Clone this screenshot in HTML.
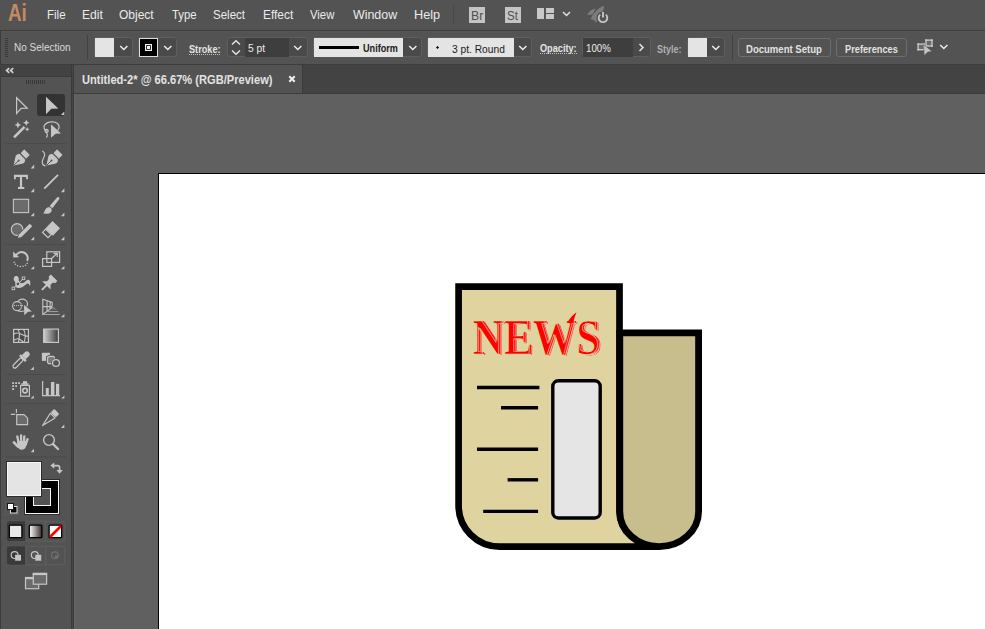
<!DOCTYPE html>
<html><head><meta charset="utf-8">
<style>
*{margin:0;padding:0;box-sizing:border-box}
html,body{width:985px;height:629px;overflow:hidden;background:#606060;font-family:"Liberation Sans",sans-serif}
.a{position:absolute}
.t{position:absolute;white-space:nowrap;transform-origin:0 0;line-height:normal}
svg{position:absolute}
</style></head><body>

<div class="a" style="left:0px;top:0px;width:985px;height:30px;background:#535353"></div>
<div class="a" style="left:0px;top:30px;width:985px;height:1px;background:#3c3c3c"></div>
<div class="a" style="left:0px;top:31px;width:985px;height:33px;background:#535353"></div>
<div class="a" style="left:0px;top:31px;width:985px;height:1px;background:#575757"></div>
<div class="a" style="left:0px;top:64px;width:985px;height:1px;background:#3d3d3d"></div>
<div class="a" style="left:74px;top:65px;width:911px;height:28px;background:#434343"></div>
<div class="a" style="left:74px;top:65px;width:228px;height:28px;background:#535353"></div>
<div class="a" style="left:302px;top:65px;width:1px;height:28px;background:#3b3b3b"></div>
<div class="a" style="left:74px;top:93px;width:911px;height:1px;background:#3c3c3c"></div>
<div class="a" style="left:74px;top:94px;width:911px;height:535px;background:#606060"></div>
<div class="a" style="left:74px;top:94px;width:1px;height:535px;background:#666666"></div>
<div class="a" style="left:71px;top:65px;width:1px;height:564px;background:#393939"></div>
<div class="a" style="left:72px;top:65px;width:1px;height:564px;background:#464646"></div>
<div class="a" style="left:73px;top:65px;width:1px;height:564px;background:#393939"></div>
<div class="a" style="left:0px;top:65px;width:71px;height:11px;background:#434343"></div>
<div class="a" style="left:0px;top:75.5px;width:71px;height:1.5px;background:#3b3b3b"></div>
<div class="a" style="left:0px;top:77px;width:71px;height:552px;background:#535353"></div>
<div class="a" style="left:0px;top:31px;width:1px;height:598px;background:#3d3d3d"></div>
<div class="a" style="left:158px;top:173px;width:827px;height:456px;background:#fff;border-left:1px solid #000;border-top:1px solid #000"></div>
<div class="t" style="left:8.2px;top:-0.2px;font-size:23px;font-weight:bold;color:#c48a62;transform:scaleX(0.82)">Ai</div>
<div class="a" style="left:453px;top:5px;width:1px;height:19px;background:#484848"></div>
<div class="a" style="left:469px;top:7px;width:16px;height:16px;background:#c4c4c4"></div>
<div class="a" style="left:505px;top:7px;width:16px;height:16px;background:#c4c4c4"></div>
<svg style="left:537px;top:7px" width="36" height="14"><g fill="#c8c8c8"><rect x="0" y="1" width="7" height="11"/><rect x="9" y="1" width="8" height="5"/><rect x="9" y="7" width="8" height="5"/></g><path d="M26,5 L29.5,8.5 L33,5" fill="none" stroke="#e0e0e0" stroke-width="1.5"/></svg>
<svg style="left:584px;top:3px" width="26" height="26" viewBox="584 3 26 26"><g fill="#7c7c7c"><path d="M587,15 C589,11.2 592,9.2 595.5,8.6 L592.5,14.5 Z"/><path d="M590.5,19 C593.5,13 598.5,7.5 604.2,5.8 C603.8,11.5 600.5,16.5 596,21 Z"/><path d="M594.8,22.6 C594.6,20.5 595.5,18.8 597.5,17 L600.8,19.5 Z"/></g><circle cx="603" cy="18" r="6.6" fill="#535353"/><path d="M600.2,14.6 A4.3,4.3 0 1 0 605.8,14.6" fill="none" stroke="#c4c4c4" stroke-width="1.9"/><path d="M603,12 V17.6" stroke="#c4c4c4" stroke-width="1.9"/></svg>
<div class="a" style="left:5px;top:38px;width:3px;height:19px;background:repeating-linear-gradient(#383838 0 1px,transparent 1px 2px)"></div>
<div class="a" style="left:87px;top:35px;width:1px;height:25px;background:#424242"></div>
<div class="a" style="left:94px;top:37.3px;width:39px;height:19.900000000000006px;background:#4a4a4a;border:1px solid #5e5e5e;border-radius:3px"></div>
<div class="a" style="left:95px;top:38px;width:19px;height:19px;background:#e4e4e4"></div>
<svg class="a" style="left:119px;top:45px" width="10" height="6"><path d="M1.2,1 L4.8,4.5 L8.4,1" fill="none" stroke="#ececec" stroke-width="1.5"/></svg>
<div class="a" style="left:138px;top:37.3px;width:39px;height:19.900000000000006px;background:#4a4a4a;border:1px solid #5e5e5e;border-radius:3px"></div>
<div class="a" style="left:139px;top:38px;width:19px;height:19px;background:#000;border:1px solid #dcdcdc"></div>
<svg style="left:139px;top:38px" width="19" height="19" viewBox="139 38 19 19"><rect x="145.6" y="44.6" width="5.8" height="5.8" fill="none" stroke="#f0f0f0" stroke-width="1.2"/><rect x="147" y="46" width="3" height="3" fill="#f0f0f0"/></svg>
<svg class="a" style="left:163px;top:45px" width="10" height="6"><path d="M1.2,1 L4.8,4.5 L8.4,1" fill="none" stroke="#ececec" stroke-width="1.5"/></svg>
<div class="a" style="left:189px;top:54px;width:31px;height:1px;background:repeating-linear-gradient(90deg,#c0c0c0 0 1px,transparent 1px 2px)"></div>
<div class="a" style="left:227px;top:37.3px;width:81px;height:19.900000000000006px;background:#4a4a4a;border:1px solid #5e5e5e;border-radius:3px"></div>
<div class="a" style="left:245px;top:38px;width:44px;height:19px;background:#3e3e3e"></div>
<svg style="left:230px;top:39px" width="12" height="17"><path d="M2,5.5 L6,1.8 L10,5.5 M2,11.5 L6,15.2 L10,11.5" fill="none" stroke="#e6e6e6" stroke-width="1.4"/></svg>
<svg class="a" style="left:293px;top:45px" width="10" height="6"><path d="M1.2,1 L4.8,4.5 L8.4,1" fill="none" stroke="#ececec" stroke-width="1.5"/></svg>
<div class="a" style="left:313px;top:37.3px;width:109px;height:19.900000000000006px;background:#4a4a4a;border:1px solid #5e5e5e;border-radius:3px"></div>
<div class="a" style="left:314px;top:38px;width:89px;height:19px;background:#e4e4e4"></div>
<div class="a" style="left:319px;top:46px;width:40px;height:3px;background:#000"></div>
<svg class="a" style="left:408px;top:45px" width="10" height="6"><path d="M1.2,1 L4.8,4.5 L8.4,1" fill="none" stroke="#ececec" stroke-width="1.5"/></svg>
<div class="a" style="left:427px;top:37.3px;width:105px;height:19.900000000000006px;background:#4a4a4a;border:1px solid #5e5e5e;border-radius:3px"></div>
<div class="a" style="left:428px;top:38px;width:86px;height:19px;background:#e4e4e4"></div>
<svg style="left:436px;top:46px" width="3" height="3"><path d="M1.5,0 L3,1.5 L1.5,3 L0,1.5Z" fill="#000"/></svg>
<svg class="a" style="left:518px;top:45px" width="10" height="6"><path d="M1.2,1 L4.8,4.5 L8.4,1" fill="none" stroke="#ececec" stroke-width="1.5"/></svg>
<div class="a" style="left:540px;top:53px;width:37px;height:1px;background:repeating-linear-gradient(90deg,#c0c0c0 0 1px,transparent 1px 2px)"></div>
<div class="a" style="left:582px;top:37.3px;width:69px;height:19.900000000000006px;background:#4a4a4a;border:1px solid #5e5e5e;border-radius:3px"></div>
<div class="a" style="left:583px;top:38px;width:50px;height:19px;background:#3e3e3e"></div>
<svg style="left:638px;top:43px" width="7" height="9"><path d="M1.5,1 L5,4.5 L1.5,8" fill="none" stroke="#e6e6e6" stroke-width="1.5"/></svg>
<div class="a" style="left:687px;top:37.3px;width:38px;height:19.900000000000006px;background:#4a4a4a;border:1px solid #5e5e5e;border-radius:3px"></div>
<div class="a" style="left:688px;top:38px;width:19px;height:19px;background:#e4e4e4"></div>
<svg class="a" style="left:711px;top:45px" width="10" height="6"><path d="M1.2,1 L4.8,4.5 L8.4,1" fill="none" stroke="#ececec" stroke-width="1.5"/></svg>
<div class="a" style="left:732px;top:35px;width:1px;height:25px;background:#424242"></div>
<div class="a" style="left:738px;top:38px;width:93px;height:18.5px;border:1px solid #6e6e6e;border-radius:3px"></div>
<div class="a" style="left:836px;top:38px;width:71px;height:18.5px;border:1px solid #6e6e6e;border-radius:3px"></div>
<svg style="left:910px;top:34px" width="30" height="26" viewBox="910 34 30 26"><g fill="#6a6a6a" stroke="#cdcdcd" stroke-width="1.3"><rect x="918.1" y="44.1" width="6" height="5.6"/><rect x="926" y="40.1" width="6" height="5.9"/></g><g fill="#cdcdcd"><circle cx="918.1" cy="44.1" r="0.9"/><circle cx="924.1" cy="44.1" r="0.9"/><circle cx="918.1" cy="49.7" r="0.9"/><circle cx="926" cy="40.1" r="0.9"/><circle cx="932" cy="40.1" r="0.9"/><circle cx="932" cy="46" r="0.9"/></g><path d="M923.6,44.4 L932.2,51.6 L927.8,52 L924.2,55.6 Z" fill="#c6c6c6" stroke="#535353" stroke-width="0.6"/></svg>
<svg class="a" style="left:938.5px;top:43.5px" width="10" height="6"><path d="M1.2,1 L4.8,4.5 L8.4,1" fill="none" stroke="#ececec" stroke-width="1.5"/></svg>
<svg style="left:288px;top:75px" width="8" height="8"><path d="M1.3,1.3 L6.7,6.7 M6.7,1.3 L1.3,6.7" stroke="#f0f0f0" stroke-width="2"/></svg>
<div class="t" style="left:46.62px;top:6.80px;font-size:13px;font-weight:normal;color:#ebebeb;transform:scaleX(0.8850)">File</div>
<div class="t" style="left:81.67px;top:6.80px;font-size:13px;font-weight:normal;color:#ebebeb;transform:scaleX(0.9333)">Edit</div>
<div class="t" style="left:118.90px;top:6.50px;font-size:13px;font-weight:normal;color:#ebebeb;transform:scaleX(0.9237)">Object</div>
<div class="t" style="left:171.80px;top:6.80px;font-size:13px;font-weight:normal;color:#ebebeb;transform:scaleX(0.8714)">Type</div>
<div class="t" style="left:213.21px;top:6.60px;font-size:13px;font-weight:normal;color:#ebebeb;transform:scaleX(0.8857)">Select</div>
<div class="t" style="left:262.88px;top:6.60px;font-size:13px;font-weight:normal;color:#ebebeb;transform:scaleX(0.9156)">Effect</div>
<div class="t" style="left:310.10px;top:6.80px;font-size:13px;font-weight:normal;color:#ebebeb;transform:scaleX(0.8714)">View</div>
<div class="t" style="left:353.00px;top:6.80px;font-size:13px;font-weight:normal;color:#ebebeb;transform:scaleX(0.9543)">Window</div>
<div class="t" style="left:413.62px;top:6.60px;font-size:13px;font-weight:normal;color:#ebebeb;transform:scaleX(0.9760)">Help</div>
<div class="t" style="left:14.10px;top:41.90px;font-size:10px;font-weight:normal;color:#dadada;transform:scaleX(0.9964)">No Selection</div>
<div class="t" style="left:189.10px;top:43.70px;font-size:10px;font-weight:bold;color:#e4e4e4;transform:scaleX(0.9147)">Stroke:</div>
<div class="t" style="left:248.00px;top:43.00px;font-size:10px;font-weight:normal;color:#ececec;transform:scaleX(1.0235)">5 pt</div>
<div class="t" style="left:363.40px;top:43.40px;font-size:10px;font-weight:bold;color:#1a1a1a;transform:scaleX(0.9105)">Uniform</div>
<div class="t" style="left:451.90px;top:43.70px;font-size:10px;font-weight:normal;color:#1a1a1a;transform:scaleX(1.0216)">3 pt. Round</div>
<div class="t" style="left:540.00px;top:43.20px;font-size:10px;font-weight:bold;color:#e4e4e4;transform:scaleX(0.9154)">Opacity:</div>
<div class="t" style="left:585.63px;top:43.40px;font-size:10px;font-weight:normal;color:#ececec;transform:scaleX(0.9680)">100%</div>
<div class="t" style="left:657.00px;top:43.70px;font-size:10px;font-weight:bold;color:#b0b0b0;transform:scaleX(0.8963)">Style:</div>
<div class="t" style="left:746.45px;top:43.80px;font-size:10px;font-weight:bold;color:#e2e2e2;transform:scaleX(0.9538)">Document Setup</div>
<div class="t" style="left:844.68px;top:43.80px;font-size:10px;font-weight:bold;color:#e2e2e2;transform:scaleX(0.9232)">Preferences</div>
<div class="t" style="left:470.68px;top:8.70px;font-size:12px;font-weight:normal;color:#505050;transform:scaleX(1.0182)">Br</div>
<div class="t" style="left:506.84px;top:8.70px;font-size:12px;font-weight:normal;color:#505050;transform:scaleX(0.9600)">St</div>
<div class="t" style="left:82.31px;top:73.30px;font-size:12.5px;font-weight:bold;color:#e2e2e2;transform:scaleX(0.8887)">Untitled-2* @ 66.67% (RGB/Preview)</div>
<svg style="left:0;top:0" width="985" height="629" viewBox="0 0 985 629">
  <path d="M458.6,286.6 H619.5 V511.4 A39.65,35.2 0 0 0 659.15,546.6 H499.6 A41,41 0 0 1 458.6,505.6 Z" fill="#dfd4a0" stroke="#000" stroke-width="6.7"/>
  <path d="M619.8,332.8 H698.6 V511.4 A39.4,35.2 0 0 1 619.8,511.4 Z" fill="#c8bd8c" stroke="#000" stroke-width="6.8"/>
  <g stroke="#000" stroke-width="3.4">
    <line x1="477" y1="387.5" x2="539.4" y2="387.5"/>
    <line x1="501" y1="407.8" x2="538.1" y2="407.8"/>
    <line x1="477" y1="449.3" x2="538.1" y2="449.3"/>
    <line x1="507.6" y1="479.8" x2="538.1" y2="479.8"/>
    <line x1="483.2" y1="511.4" x2="538.1" y2="511.4"/>
  </g>
  <rect x="552.8" y="380.8" width="47.4" height="137.2" rx="5.5" fill="#e5e5e5" stroke="#000" stroke-width="3.4"/>
  <text x="474.2" y="355.2" font-family="Liberation Serif" font-weight="bold" font-size="50" fill="#ff0000" textLength="128" lengthAdjust="spacingAndGlyphs">NEWS</text>
  <text x="473.6" y="354.6" font-family="Liberation Serif" font-weight="bold" font-size="50" fill="#dfd4a0" textLength="128" lengthAdjust="spacingAndGlyphs">NEWS</text>
  <text x="473" y="354" font-family="Liberation Serif" font-weight="bold" font-size="50" fill="#ff0000" textLength="128" lengthAdjust="spacingAndGlyphs">NEWS</text>
  <text x="471.4" y="354" font-family="Liberation Serif" font-weight="bold" font-size="50" fill="none" stroke="#dfd4a0" stroke-width="0.7" textLength="128" lengthAdjust="spacingAndGlyphs">NEWS</text>
  <path d="M567.5,322 C570,318 573,315 576.5,312.3 C575,316 574,319 573.5,322 Z" fill="#ff0000"/>
</svg>
<svg style="left:0;top:0" width="74" height="629" viewBox="0 0 74 629">
<path d="M9.2,68.2 L6.6,70.5 L9.2,72.8 M13.2,68.2 L10.6,70.5 L13.2,72.8" fill="none" stroke="#d0d0d0" stroke-width="1.7"/>
<rect x="26" y="80" width="1" height="4" fill="#383838"/>
<rect x="28" y="80" width="1" height="4" fill="#383838"/>
<rect x="30" y="80" width="1" height="4" fill="#383838"/>
<rect x="32" y="80" width="1" height="4" fill="#383838"/>
<rect x="34" y="80" width="1" height="4" fill="#383838"/>
<rect x="36" y="80" width="1" height="4" fill="#383838"/>
<rect x="38" y="80" width="1" height="4" fill="#383838"/>
<rect x="40" y="80" width="1" height="4" fill="#383838"/>
<rect x="42" y="80" width="1" height="4" fill="#383838"/>
<rect x="44" y="80" width="1" height="4" fill="#383838"/>
<rect x="6" y="143" width="60" height="1" fill="#4a4a4a"/>
<rect x="6" y="244" width="60" height="1" fill="#4a4a4a"/>
<rect x="6" y="321" width="60" height="1" fill="#4a4a4a"/>
<rect x="6" y="374" width="60" height="1" fill="#4a4a4a"/>
<rect x="6" y="403" width="60" height="1" fill="#4a4a4a"/>
<rect x="6" y="456.5" width="60" height="1" fill="#4a4a4a"/>
<path d="M16.6,97.8 L27.2,108.2 L21.2,108.4 L16.6,113.4 Z" fill="none" stroke="#c6c6c6" stroke-width="1.2" stroke-linejoin="miter"/>
<rect x="37" y="94" width="28" height="22" rx="3" fill="#333333"/>
<path d="M46,96.8 L58.3,108.6 L51.3,108.7 L46,114.3 Z" fill="#c6c6c6"/>
<path d="M64.3,111.5 L64.3,115 L60.8,115 Z" fill="#c6c6c6"/>
<line x1="14" y1="137.3" x2="24.5" y2="126.8" stroke="#c6c6c6" stroke-width="2.6"/>
<path d="M17.9,121.6 L18.919999999999998,123.98 L21.299999999999997,125 L18.919999999999998,126.02 L17.9,128.4 L16.88,126.02 L14.499999999999998,125 L16.88,123.98 Z" fill="#c6c6c6"/>
<path d="M26.3,119.6 L27.26,121.84 L29.5,122.8 L27.26,123.75999999999999 L26.3,126.0 L25.34,123.75999999999999 L23.1,122.8 L25.34,121.84 Z" fill="#c6c6c6"/>
<path d="M27.2,127.00000000000001 L27.89,128.61 L29.5,129.3 L27.89,129.99 L27.2,131.60000000000002 L26.509999999999998,129.99 L24.9,129.3 L26.509999999999998,128.61 Z" fill="#c6c6c6"/>
<path d="M47.5,131.5 C44,130.5 42.8,127 45,124.5 C47.5,121.5 54.5,121 57.5,123.5 C59.8,125.5 59.5,128.5 57.5,130.5" fill="none" stroke="#c6c6c6" stroke-width="1.2"/>
<circle cx="46.6" cy="131" r="1.6" fill="none" stroke="#c6c6c6" stroke-width="1.1"/>
<path d="M46.2,132.6 C47.6,134 47.6,136 46.2,137.5" fill="none" stroke="#c6c6c6" stroke-width="1.1"/>
<path d="M51,124.2 L61,133.6 L55.6,133.8 L51,137.8 Z" fill="#c6c6c6"/>
<g transform="translate(13.6,165.6) rotate(45)"><path d="M0,0 L-5.3,-8.2 C-5.7,-10.4 -4.8,-12 -3.2,-12.6 L3.2,-12.6 C4.8,-12 5.7,-10.4 5.3,-8.2 Z" fill="#c6c6c6"/><line x1="0" y1="-0.5" x2="0" y2="-6.5" stroke="#535353" stroke-width="0.9"/><circle cx="0" cy="-7.2" r="1" fill="#535353"/><rect x="-3.9" y="-19" width="7.8" height="5.2" rx="0.6" fill="#c6c6c6"/></g>
<path d="M34.2,164.5 L34.2,168.5 L30.7,168.5 Z" fill="#c6c6c6"/>
<g transform="translate(46.4,165.6) rotate(45)"><path d="M0,0 L-5.3,-8.2 C-5.7,-10.4 -4.8,-12 -3.2,-12.6 L3.2,-12.6 C4.8,-12 5.7,-10.4 5.3,-8.2 Z" fill="#c6c6c6"/><line x1="0" y1="-0.5" x2="0" y2="-6.5" stroke="#535353" stroke-width="0.9"/><circle cx="0" cy="-7.2" r="1" fill="#535353"/><rect x="-3.9" y="-19" width="7.8" height="5.2" rx="0.6" fill="#c6c6c6"/></g>
<path d="M42.2,151 C45.5,152.5 45,155.5 43.5,158 C41.5,161.5 41.8,165.5 45.5,165.8" fill="none" stroke="#c6c6c6" stroke-width="1.2"/>
<path d="M14,174.8 H27.9 V179.3 H26.1 V177 H22.1 V187 H24.3 V189.1 H18 V187 H19.9 V177 H15.8 V179.3 H14 Z" fill="#c6c6c6"/>
<path d="M34.2,188.3 L34.2,192.3 L30.7,192.3 Z" fill="#c6c6c6"/>
<line x1="44.2" y1="188.6" x2="58" y2="174.8" stroke="#c6c6c6" stroke-width="1.8"/>
<path d="M64.4,188.3 L64.4,192.3 L60.9,192.3 Z" fill="#c6c6c6"/>
<rect x="13.4" y="199.3" width="15.2" height="13.3" fill="#6b6b6b" stroke="#c6c6c6" stroke-width="1.1"/>
<path d="M34.2,212.6 L34.2,216.3 L30.7,216.3 Z" fill="#c6c6c6"/>
<path d="M57.3,197.3 C58.5,196.6 59.8,197.6 59.3,198.9 L52.4,208.2 L49.6,206.1 Z" fill="#c6c6c6"/>
<path d="M43,213.6 C44.5,212.5 44.8,209.5 46.3,208.2 C47.8,206.8 50.3,207 51.3,208.6 C52.3,210.2 51.6,212.5 49.6,213.2 C47.5,214 45,213.8 43,213.6 Z" fill="#c6c6c6"/>
<path d="M64.4,212.6 L64.4,216.3 L60.9,216.3 Z" fill="#c6c6c6"/>
<circle cx="17.1" cy="229.5" r="5.8" fill="#6b6b6b" stroke="#c6c6c6" stroke-width="1.2"/>
<path d="M29.73,223.73 L32.27,226.27 L21.47,237.07 L17.9,238.1 L18.93,234.53 Z" fill="#c6c6c6" stroke="#535353" stroke-width="1.4" paint-order="stroke" stroke-linejoin="round"/>
<path d="M34.2,236.5 L34.2,240.3 L30.7,240.3 Z" fill="#c6c6c6"/>
<g transform="translate(52.5,221.1) rotate(44)"><rect x="0" y="0" width="10.4" height="10.2" fill="#c6c6c6"/><rect x="0.7" y="10.6" width="7.6" height="4.4" fill="none" stroke="#c6c6c6" stroke-width="1.2"/></g>
<path d="M64.4,236.5 L64.4,240.3 L60.9,240.3 Z" fill="#c6c6c6"/>
<path d="M15.67,256.08 A6.2,6.2 0 1 1 27.12,260.82" fill="none" stroke="#c6c6c6" stroke-width="2"/>
<path d="M13.1,251.6 L13.3,257.6 L19.2,257.2 Z" fill="#c6c6c6"/>
<circle cx="14.2" cy="262.2" r="0.8" fill="#c6c6c6"/>
<circle cx="15.4" cy="264.3" r="0.8" fill="#c6c6c6"/>
<circle cx="17.6" cy="265.8" r="0.8" fill="#c6c6c6"/>
<circle cx="20.3" cy="266.5" r="0.8" fill="#c6c6c6"/>
<circle cx="23" cy="266.2" r="0.8" fill="#c6c6c6"/>
<circle cx="25.5" cy="265.2" r="0.8" fill="#c6c6c6"/>
<circle cx="27.2" cy="263.3" r="0.8" fill="#c6c6c6"/>
<path d="M34.2,265.9 L34.2,269.2 L30.7,269.2 Z" fill="#c6c6c6"/>
<rect x="46.8" y="251.8" width="12.8" height="10.6" fill="none" stroke="#c6c6c6" stroke-width="1.2"/>
<rect x="42.6" y="258.6" width="9" height="7.8" fill="none" stroke="#c6c6c6" stroke-width="1.2"/>
<path d="M51.5,258.5 L57,253.5 M53.5,253.3 H57.3 V257" fill="none" stroke="#c6c6c6" stroke-width="1.2"/>
<path d="M64.4,265.9 L64.4,269.2 L60.9,269.2 Z" fill="#c6c6c6"/>
<path d="M14,280.5 C13.2,278 14.5,275.8 16.8,276 C18.5,276.3 19,278.5 18.8,280.5 C19,282.5 20.5,283.5 23,283 C25.5,282.3 26.5,279.5 28.5,279.8 C30.5,280.2 30.8,283.5 30,286.2 C29.2,284 28.3,283.2 27,283.8 C24.5,285.5 22.5,287.8 19,288 C16,288.2 15,286 15.5,284 C15.8,282.5 14.8,281.5 14,280.5 Z" fill="#c6c6c6"/>
<line x1="13.4" y1="288.4" x2="23.5" y2="278.3" stroke="#c6c6c6" stroke-width="1"/>
<circle cx="17.9" cy="283.9" r="1.9" fill="#535353" stroke="#c6c6c6" stroke-width="1.1"/>
<rect x="22.2" y="277" width="2.6" height="2.6" fill="#535353" stroke="#c6c6c6" stroke-width="0.9"/>
<rect x="12.1" y="287.1" width="2.6" height="2.6" fill="#535353" stroke="#c6c6c6" stroke-width="0.9"/>
<path d="M34.2,289.7 L34.2,293.3 L30.7,293.3 Z" fill="#c6c6c6"/>
<g transform="translate(42.4,289.4) rotate(45)"><line x1="0" y1="0" x2="0" y2="-6" stroke="#c6c6c6" stroke-width="2" stroke-linecap="round"/><path d="M-5.9,-5.6 L5.9,-5.6 L2.6,-9 L2.6,-12 L4.6,-13.6 L4.6,-16.6 L-4.6,-16.6 L-4.6,-13.6 L-2.6,-12 L-2.6,-9 Z" fill="#c6c6c6"/></g>
<path d="M64.4,289.7 L64.4,293.3 L60.9,293.3 Z" fill="#c6c6c6"/>
<circle cx="17.1" cy="306.1" r="4.5" fill="none" stroke="#c6c6c6" stroke-width="1.1"/>
<path d="M18,301.3 C19.5,298.8 23.5,298.4 25.8,300.4 C27.8,302.2 27.6,305 26.8,306.5" fill="none" stroke="#c6c6c6" stroke-width="1.1"/>
<path d="M17.5,310.6 C19.5,311.6 22,311.6 24,311" fill="none" stroke="#c6c6c6" stroke-width="1.1"/>
<path d="M20.5,302.5 C22,304 22.2,307.5 20.8,309.5" fill="none" stroke="#8a8a8a" stroke-width="0.9"/>
<circle cx="14.5" cy="305.6" r="0.65" fill="#c6c6c6"/>
<circle cx="16.6" cy="305.6" r="0.65" fill="#c6c6c6"/>
<circle cx="18.5" cy="305.6" r="0.65" fill="#c6c6c6"/>
<circle cx="20.6" cy="305.6" r="0.65" fill="#c6c6c6"/>
<circle cx="22.4" cy="305.6" r="0.65" fill="#c6c6c6"/>
<path d="M24,305 L31.9,311.6 L28,311.8 L24.3,315.2 Z" fill="#c6c6c6"/>
<path d="M34.2,313.9 L34.2,317.2 L30.7,317.2 Z" fill="#c6c6c6"/>
<path d="M42.8,299.2 L52.2,302.5 V307.4 L42.8,314.4 Z M47,300.7 V311 M50.1,301.8 V308.7 M42.8,306.6 H52.2" fill="none" stroke="#c6c6c6" stroke-width="1.1"/>
<path d="M52.2,306 L57,309.4 H52.2 Z" fill="#7a7a7a"/>
<path d="M46.4,311.6 H58.3 M42.8,314.5 H59.9" fill="none" stroke="#a6a6a6" stroke-width="1"/>
<path d="M64.4,313.9 L64.4,317.2 L60.9,317.2 Z" fill="#c6c6c6"/>
<rect x="13.6" y="329.4" width="14.8" height="13" fill="#4a4a4a" stroke="#c6c6c6" stroke-width="1.2"/>
<path d="M17.6,329.2 C19.8,331.5 20,336 18.3,342.6 M23.3,329.2 C25.6,332 25.8,338 24,342.6 M13.4,334.3 C15.5,333 18,332.5 19.8,333.6 C21.8,334.8 23.5,336 28.6,336.3 M13.4,340.5 C15.5,339 17.5,338.4 19,339 C21,339.8 22.5,341 23.6,342.6" fill="none" stroke="#c6c6c6" stroke-width="1.1"/>
<defs><linearGradient id="gr" x1="0" x2="1" y1="0" y2="0"><stop offset="0" stop-color="#d0d0d0"/><stop offset="1" stop-color="#3c3c3c"/></linearGradient><linearGradient id="gr2" x1="0" x2="1" y1="0" y2="0"><stop offset="0" stop-color="#ffffff"/><stop offset="1" stop-color="#3a2a2a"/></linearGradient></defs>
<rect x="43.6" y="329.1" width="14.8" height="13.3" fill="url(#gr)" stroke="#c6c6c6" stroke-width="1.2"/>
<g transform="translate(13.4,367.6) rotate(45)"><rect x="-1.9" y="-12.5" width="3.8" height="12.3" rx="1.9" fill="none" stroke="#c6c6c6" stroke-width="1.2"/><rect x="-4.2" y="-14.6" width="8.4" height="2.4" fill="#c6c6c6"/><path d="M-2.8,-14.5 V-19 A2.8,2.8 0 0 1 2.8,-19 V-14.5 Z" fill="#c6c6c6"/></g>
<path d="M33.8,366.6 L33.8,370 L30.5,370 Z" fill="#c6c6c6"/>
<rect x="41.9" y="352.8" width="8.1" height="8.1" fill="#c6c6c6"/>
<path d="M49.6,356.3 H53.4 L54.5,357.4 V362.6 L53.4,363.7 H48.6 L47.5,362.6 V357.4 Z" fill="none" stroke="#535353" stroke-width="3"/>
<path d="M49.6,356.3 H53.4 L54.5,357.4 V362.6 L53.4,363.7 H48.6 L47.5,362.6 V357.4 Z" fill="#7c7c7c" stroke="#c6c6c6" stroke-width="1.2" stroke-linejoin="round"/>
<circle cx="56" cy="363" r="3.5" fill="#535353" stroke="#535353" stroke-width="2.6"/>
<circle cx="56" cy="363" r="3.45" fill="#535353" stroke="#c6c6c6" stroke-width="1.3"/>
<rect x="12.2" y="382.2" width="1.8" height="1.8" fill="#c6c6c6"/>
<rect x="15.2" y="382.2" width="1.8" height="1.8" fill="#c6c6c6"/>
<rect x="18.2" y="382.2" width="1.8" height="1.8" fill="#c6c6c6"/>
<rect x="12.2" y="385.2" width="1.8" height="1.8" fill="#c6c6c6"/>
<rect x="15.2" y="385.2" width="1.8" height="1.8" fill="#c6c6c6"/>
<rect x="12.2" y="388.2" width="1.8" height="1.8" fill="#c6c6c6"/>
<rect x="23" y="381.2" width="4" height="2.4" fill="#c6c6c6"/><rect x="21.5" y="383.2" width="7" height="1.6" fill="#c6c6c6"/>
<rect x="20.6" y="385.4" width="8.8" height="10.8" fill="none" stroke="#c6c6c6" stroke-width="1.2"/>
<circle cx="25" cy="390.6" r="2.3" fill="none" stroke="#c6c6c6" stroke-width="1.6"/>
<path d="M33.8,395.4 L33.8,398.6 L30.5,398.6 Z" fill="#c6c6c6"/>
<path d="M42.6,381 V395.6 H60" fill="none" stroke="#c6c6c6" stroke-width="1.2"/>
<rect x="45.8" y="388" width="3" height="7.2" fill="#c6c6c6"/><rect x="50.9" y="382" width="3.5" height="13.2" fill="#c6c6c6"/><rect x="56" y="383.8" width="3.2" height="11.4" fill="#c6c6c6"/>
<path d="M64.4,395.4 L64.4,398.6 L61.2,398.6 Z" fill="#c6c6c6"/>
<path d="M10.9,414.4 H15.2 M16.4,409 V413" fill="none" stroke="#c6c6c6" stroke-width="1.1"/>
<path d="M16.7,414.6 H24 L27.6,418.2 V424.6 H16.7 Z" fill="#6b6b6b" stroke="#c6c6c6" stroke-width="1.1"/>
<g transform="translate(42.6,425.6) rotate(45)"><path d="M0,0 L-3.3,-14.2 H3.3 Z" fill="none" stroke="#c6c6c6" stroke-width="1.2" stroke-linejoin="round"/><rect x="-3.6" y="-20" width="7.2" height="5" rx="1" fill="#c6c6c6"/></g>
<path d="M64.3,424.6 L64.3,428 L61,428 Z" fill="#c6c6c6"/>
<g stroke="#c6c6c6" stroke-linecap="round" fill="none"><path d="M17.3,436.4 L18.6,443 M21.1,435.4 V442 M24.3,436.3 L24,442.5 M27.5,439.2 L25.8,444.5" stroke-width="2.3"/><path d="M13.9,442.4 L18,446.6" stroke-width="2.6"/></g>
<path d="M17.2,441 H26.6 C27,445.5 25.8,449.8 21.6,449.8 C18.2,449.8 17.2,446 17.2,441 Z" fill="#c6c6c6"/>
<path d="M34,448.7 L34,452.3 L30.7,452.3 Z" fill="#c6c6c6"/>
<circle cx="49" cy="440" r="5.4" fill="none" stroke="#c6c6c6" stroke-width="1.4"/>
<line x1="53" y1="444" x2="58" y2="449" stroke="#c6c6c6" stroke-width="2.4" stroke-linecap="round"/>
<rect x="24" y="479" width="36" height="36" fill="#2e2e2e"/>
<rect x="25" y="480" width="34" height="34" fill="#f6f6f6"/>
<rect x="26" y="481" width="32" height="32" fill="#000"/>
<rect x="33" y="488" width="18" height="18" fill="#f6f6f6"/>
<rect x="34" y="489" width="16" height="16" fill="#535353"/>
<rect x="6" y="461" width="36" height="36" fill="#2e2e2e"/>
<rect x="7" y="462" width="34" height="34" fill="#f8f8f8"/>
<rect x="8" y="463" width="32" height="32" fill="#e4e4e4"/>
<path d="M53.2,465.6 H57.6 Q59.6,465.6 59.6,467.6 V471" fill="none" stroke="#c6c6c6" stroke-width="1.6"/>
<path d="M50.4,465.6 L54.2,462.4 V468.8 Z M59.6,473.8 L56.4,470 H62.8 Z" fill="#c6c6c6"/>
<rect x="5.5" y="501.5" width="13" height="13" fill="none" stroke="#5b5b5b" stroke-width="1"/>
<rect x="10.5" y="506.5" width="6.5" height="6.5" fill="#000" stroke="#e0e0e0" stroke-width="1"/>
<rect x="7.5" y="503.5" width="6" height="6" fill="#fff" stroke="#1a1a1a" stroke-width="1"/>
<rect x="6.7" y="521.3" width="58" height="20" rx="2.5" fill="none" stroke="#5f5f5f" stroke-width="1"/>
<path d="M9,521.3 H25.5 V541.3 H9 A2.5,2.5 0 0 1 6.7,538.8 V523.8 A2.5,2.5 0 0 1 9,521.3 Z" fill="#3a3a3a"/>
<rect x="25.5" y="521.5" width="1" height="19.6" fill="#5f5f5f"/><rect x="45.2" y="521.5" width="1" height="19.6" fill="#5f5f5f"/>
<rect x="9.3" y="525.2" width="12.6" height="12.5" rx="1" fill="#e8e8e8" stroke="#000" stroke-width="1.3"/>
<rect x="29.3" y="525.2" width="12.6" height="12.5" rx="1" fill="url(#gr2)" stroke="#000" stroke-width="1.3"/>
<rect x="49.1" y="525.2" width="12.6" height="12.5" rx="1" fill="#fff" stroke="#000" stroke-width="1.3"/>
<line x1="50" y1="537" x2="61" y2="526" stroke="#ff0000" stroke-width="2.6"/>
<rect x="6.7" y="546.3" width="58" height="18.5" rx="2.5" fill="none" stroke="#5f5f5f" stroke-width="1"/>
<path d="M9,546.3 H25.5 V564.8 H9 A2.5,2.5 0 0 1 6.7,562.3 V548.8 A2.5,2.5 0 0 1 9,546.3 Z" fill="#3a3a3a"/>
<rect x="25.5" y="546.5" width="1" height="18.1" fill="#5f5f5f"/><rect x="45.2" y="546.5" width="1" height="18.1" fill="#5f5f5f"/>
<circle cx="14.6" cy="555.1" r="3.4" fill="none" stroke="#c6c6c6" stroke-width="1.2"/><rect x="15.1" y="554.8" width="5.9" height="5.9" fill="#c6c6c6"/>
<circle cx="34.8" cy="555.1" r="3.4" fill="none" stroke="#c6c6c6" stroke-width="1.2"/><rect x="35.3" y="554.8" width="5.9" height="5.9" fill="#c6c6c6"/>
<circle cx="54.9" cy="555.3" r="3.4" fill="none" stroke="#707070" stroke-width="1.2"/><path d="M54.9,555.3 H58.3 A3.4,3.4 0 0 1 54.9,558.7 Z" fill="#707070"/>
<rect x="25.5" y="577.5" width="13.2" height="11.2" fill="#6b6b6b" stroke="#c6c6c6" stroke-width="1.2"/><rect x="25" y="577" width="14.2" height="2.2" fill="#c6c6c6"/>
<rect x="33.3" y="573.4" width="13.3" height="10.8" fill="#6b6b6b" stroke="#c6c6c6" stroke-width="1.2"/><rect x="32.8" y="572.9" width="14.3" height="2.2" fill="#c6c6c6"/>
</svg>
</body></html>
